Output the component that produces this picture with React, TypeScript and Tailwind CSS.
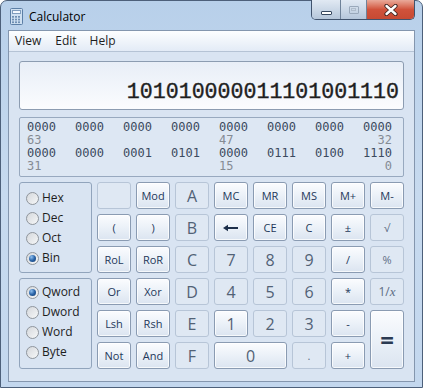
import React from "react";

type BtnProps = {
  children: React.ReactNode;
  on?: boolean;
  big?: boolean;
  className?: string;
};

function Btn({ children, on = true, big = false, className = "" }: BtnProps) {
  const base =
    "flex items-center justify-center rounded-[3px] border leading-none select-none font-['Open_Sans','Noto_Sans',sans-serif]";
  const state = on
    ? "border-[#8a9bb2] bg-linear-to-b from-[#fbfcfe] via-[#ebf1f8] to-[#dbe4f0] shadow-[inset_0_0_0_1px_rgba(255,255,255,0.75)]"
    : "border-[#b7c5d7] bg-[#dfe8f3]";
  const text = big
    ? "text-[16px] text-[#526276]"
    : on
    ? "text-[11px] text-[#24385a]"
    : "text-[11px] text-[#5e6d83]";
  return <div className={`${base} ${state} ${text} ${className}`}>{children}</div>;
}

function Radio({ label, checked = false }: { label: string; checked?: boolean }) {
  return (
    <div className="flex h-[20px] items-center">
      <div className="flex h-[13px] w-[13px] items-center justify-center rounded-full border border-[#8f959c] bg-linear-to-br from-[#d5d8dc] to-[#f6f7f8]">
        {checked && (
          <div className="h-[7px] w-[7px] rounded-full bg-radial-[at_35%_30%] from-[#8fc0f0] via-[#2a64a8] to-[#123a6a]" />
        )}
      </div>
      <span className="ml-[3px] text-[12px] leading-none text-[#1e1e1e]">{label}</span>
    </div>
  );
}

function BitRow({ groups }: { groups: string[] }) {
  return (
    <div className="grid grid-cols-[repeat(7,48px)_29px] text-[#3b4a5e]">
      {groups.map((g, i) => (
        <span key={i}>{g}</span>
      ))}
    </div>
  );
}

function LabelRow({ a, b, c }: { a: string; b: string; c: string }) {
  return (
    <div className="grid grid-cols-[repeat(7,48px)_29px] text-[#858b93]">
      <span className="col-start-1">{a}</span>
      <span className="col-start-5">{b}</span>
      <span className="col-start-8 text-right">{c}</span>
    </div>
  );
}

function CalcIcon() {
  return (
    <svg width="13" height="17" viewBox="0 0 13 17">
      <rect x="0.5" y="0.5" width="12" height="16" rx="1" fill="#cfe0f1" stroke="#5c7fa6" />
      <rect x="2.5" y="2.5" width="8" height="3" fill="#f4f9ff" stroke="#7f9cbd" />
      {[0, 1, 2].map((r) =>
        [0, 1, 2].map((c) => (
          <rect key={`${r}-${c}`} x={2 + c * 3} y={8 + r * 2.7} width="2" height="1.7" fill="#6f8fb3" />
        ))
      )}
    </svg>
  );
}

export default function App() {
  return (
    <div className="h-[388px] w-[423px] overflow-hidden bg-white font-['Open_Sans','Noto_Sans',sans-serif]">
      <div className="flex h-[388px] w-[423px] flex-col rounded-t-[7px] border border-[#4d607a] bg-linear-to-b from-[#b8d0ea] via-[#c7daef] to-[#c3d7ee] px-[7px] pb-[5px]">
        {/* Title bar */}
        <div className="flex h-[29px] shrink-0 items-start">
          <div className="mt-[7px] ml-[2px] flex items-center">
            <CalcIcon />
            <span className="ml-[6px] text-[12px] leading-none text-black">Calculator</span>
          </div>
          <div className="-mt-px ml-auto mr-[0px] flex h-[20px] overflow-hidden rounded-b-[5px] border border-t-0 border-[#40536d]">
            <div className="flex w-[29px] items-center justify-center border-r border-[#6f8299] bg-linear-to-b from-[#e1e9f3] via-[#cbd8e7] to-[#b5c6da]">
              <div className="mt-[6px] h-[4px] w-[11px] rounded-[1px] border border-[#36485f] bg-white" />
            </div>
            <div className="flex w-[26px] items-center justify-center border-r border-[#6f8299] bg-linear-to-b from-[#e1e9f3] via-[#cbd8e7] to-[#b5c6da]">
              <div className="flex h-[8px] w-[10px] items-center justify-center rounded-[1px] border border-[#9aa9bb]">
                <div className="h-[3px] w-[5px] border border-[#b0bdcc]" />
              </div>
            </div>
            <div className="flex w-[47px] items-center justify-center bg-linear-to-b from-[#e9aa9a] via-[#d0523b] to-[#c74a33]">
              <svg width="14" height="12" viewBox="0 0 14 12">
                <path d="M2.5 2 L11.5 10 M11.5 2 L2.5 10" stroke="#3d2320" strokeWidth="4.2" strokeLinecap="round" />
                <path d="M2.5 2 L11.5 10 M11.5 2 L2.5 10" stroke="#ffffff" strokeWidth="2.4" strokeLinecap="round" />
              </svg>
            </div>
          </div>
        </div>

        {/* Menu + client */}
        <div className="flex flex-1 flex-col border border-[#8496ae] bg-[#d9e4f2]">
          <div className="flex h-[21px] shrink-0 items-center border-b border-[#b5c3d5] bg-linear-to-b from-[#fdfeff] to-[#e3ebf6] pl-[6px] text-[12px] text-[#1e1e1e]">
            <span>View</span>
            <span className="ml-[14px]">Edit</span>
            <span className="ml-[13px]">Help</span>
          </div>

          <div className="flex flex-1 flex-col px-[10px] pt-[9px]">
            {/* Display */}
            <div className="flex h-[49px] w-[385px] items-end justify-end rounded-[3px] border border-[#8c9cb1] bg-linear-to-b from-[#e8eef7] to-[#fbfcfe] pr-[4px] pb-[2px]">
              <span className="font-['Liberation_Mono',monospace] text-[21.6px] leading-[30px] text-[#1f1f1f] [-webkit-text-stroke:0.4px_#1f1f1f]">
                101010000011101001110
              </span>
            </div>

            {/* Bits */}
            <div className="mt-[7px] h-[60px] w-[385px] rounded-[2px] border border-[#98a9bf] bg-[#dde7f3] pt-[3px] pl-[7px] font-['DejaVu_Sans_Mono',monospace] text-[12px] leading-[13px]">
              <BitRow groups={["0000", "0000", "0000", "0000", "0000", "0000", "0000", "0000"]} />
              <LabelRow a="63" b="47" c="32" />
              <BitRow groups={["0000", "0000", "0001", "0101", "0000", "0111", "0100", "1110"]} />
              <LabelRow a="31" b="15" c="0" />
            </div>

            {/* Keypad */}
            <div className="mt-[5px] grid grid-cols-[73px_repeat(8,34px)] grid-rows-[repeat(6,27px)] gap-[5px]">
              <div className="col-start-1 row-span-3 row-start-1 rounded-[3px] border border-[#91a4bc] pt-[5px] pl-[6px]">
                <Radio label="Hex" />
                <Radio label="Dec" />
                <Radio label="Oct" />
                <Radio label="Bin" checked />
              </div>
              <div className="col-start-1 row-span-3 row-start-4 rounded-[3px] border border-[#91a4bc] pt-[3px] pl-[6px]">
                <Radio label="Qword" checked />
                <Radio label="Dword" />
                <Radio label="Word" />
                <Radio label="Byte" />
              </div>

              {/* Row 1 */}
              <Btn on={false}>{""}</Btn>
              <Btn>Mod</Btn>
              <Btn on={false} big>A</Btn>
              <Btn>MC</Btn>
              <Btn>MR</Btn>
              <Btn>MS</Btn>
              <Btn>M+</Btn>
              <Btn>M-</Btn>

              {/* Row 2 */}
              <Btn>(</Btn>
              <Btn>)</Btn>
              <Btn on={false} big>B</Btn>
              <Btn>
                <svg width="16" height="8" viewBox="0 0 16 8">
                  <path d="M4 4 L15 4" stroke="#1d2f4a" strokeWidth="2" />
                  <path d="M0 4 L5 0.8 L5 7.2 Z" fill="#1d2f4a" />
                </svg>
              </Btn>
              <Btn>CE</Btn>
              <Btn>C</Btn>
              <Btn>±</Btn>
              <Btn on={false}>√</Btn>

              {/* Row 3 */}
              <Btn>RoL</Btn>
              <Btn>RoR</Btn>
              <Btn on={false} big>C</Btn>
              <Btn on={false} big>7</Btn>
              <Btn on={false} big>8</Btn>
              <Btn on={false} big>9</Btn>
              <Btn>/</Btn>
              <Btn on={false}>%</Btn>

              {/* Row 4 */}
              <Btn>Or</Btn>
              <Btn>Xor</Btn>
              <Btn on={false} big>D</Btn>
              <Btn on={false} big>4</Btn>
              <Btn on={false} big>5</Btn>
              <Btn on={false} big>6</Btn>
              <Btn>*</Btn>
              <Btn on={false}>
                <span className="text-[12px]">
                  1/<span className="font-['Liberation_Serif',serif] text-[13px] italic">x</span>
                </span>
              </Btn>

              {/* Row 5 */}
              <Btn>Lsh</Btn>
              <Btn>Rsh</Btn>
              <Btn on={false} big>E</Btn>
              <Btn big>1</Btn>
              <Btn on={false} big>2</Btn>
              <Btn on={false} big>3</Btn>
              <Btn>-</Btn>
              <Btn className="row-span-2">
                <span className="text-[24px] font-bold text-[#2a3a52]">=</span>
              </Btn>

              {/* Row 6 */}
              <Btn>Not</Btn>
              <Btn>And</Btn>
              <Btn on={false} big>F</Btn>
              <Btn big className="col-span-2">0</Btn>
              <Btn on={false}>.</Btn>
              <Btn>+</Btn>
            </div>
          </div>
        </div>
      </div>
    </div>
  );
}
